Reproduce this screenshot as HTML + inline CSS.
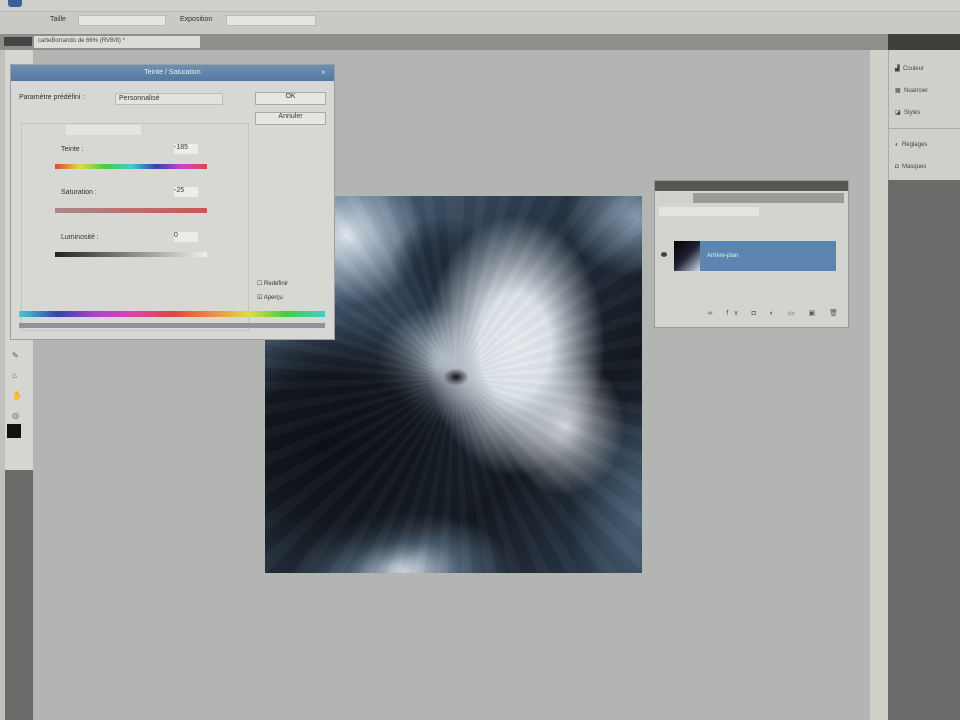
<!DOCTYPE html>
<html><head><meta charset="utf-8"><style>
*{margin:0;padding:0;box-sizing:border-box}
body{width:960px;height:720px;overflow:hidden;background:#b3b5b2;font-family:"Liberation Sans",sans-serif;font-size:8px;color:#333;position:relative}
.a{position:absolute}
</style></head><body>
<div class="a" style="left:0;top:0;width:960px;height:12px;background:#cfd0cc;border-bottom:1px solid #b8b9b5"></div>
<div class="a" style="left:8px;top:0;width:14px;height:7px;background:#3b5f99;border-radius:0 0 3px 3px"></div>
<div class="a" style="left:0;top:12px;width:960px;height:22px;background:#c9cac6"></div>
<div class="a" style="left:50px;top:16px;font-size:7px">Taille</div>
<div class="a" style="left:78px;top:15px;width:88px;height:11px;background:#e4e5e2;border:1px solid #bbb"></div>
<div class="a" style="left:180px;top:16px;font-size:7px">Exposition</div>
<div class="a" style="left:226px;top:15px;width:90px;height:11px;background:#e4e5e2;border:1px solid #bbb"></div>
<div class="a" style="left:0;top:34px;width:888px;height:16px;background:#8d8f8b"></div>
<div class="a" style="left:4px;top:37px;width:28px;height:9px;background:#444"></div>
<div class="a" style="left:34px;top:36px;width:166px;height:12px;background:#dcdcd9;font-size:6px;padding:2px 4px;color:#444">carteBorrando de 66% (RVB/8) *</div>
<div class="a" style="left:888px;top:34px;width:72px;height:16px;background:#3e403c"></div>
<div class="a" style="left:870px;top:50px;width:18px;height:670px;background:#cfd0c8"></div>
<div class="a" style="left:888px;top:50px;width:72px;height:130px;background:#cfd0cc;border-left:1px solid #aaa"></div>
<div class="a" style="left:888px;top:180px;width:72px;height:540px;background:#6a6b68"></div>
<div class="a" style="left:895px;top:58px;font-size:6px;line-height:22px;color:#444">▟ &nbsp;Couleur<br>▦ &nbsp;Nuancier<br>◪ &nbsp;Styles</div>
<div class="a" style="left:888px;top:128px;width:72px;height:1px;background:#aaa"></div>
<div class="a" style="left:895px;top:134px;font-size:6px;line-height:22px;color:#444">◐ &nbsp;Réglages<br>◘ &nbsp;Masques</div>
<div class="a" style="left:0;top:50px;width:5px;height:670px;background:#c0c1bd"></div>
<div class="a" style="left:5px;top:50px;width:28px;height:420px;background:#d5d6d2"></div>
<div class="a" style="left:5px;top:470px;width:28px;height:250px;background:#6a6b68"></div>
<div class="a" style="left:7px;top:424px;width:14px;height:14px;background:#111"></div>
<div class="a" style="left:12px;top:346px;font-size:8px;line-height:20px;color:#555">✎<br>⌂<br>✋<br>◎</div>
<div class="a" style="left:265px;top:196px;width:377px;height:377px;overflow:hidden;background:#1a1e24">
 <div class="a" style="inset:0;background:
 radial-gradient(ellipse 90px 130px at 250px 150px,#f6f7f7 0%,#e8edf0 40%,rgba(200,212,222,0) 100%),
 radial-gradient(ellipse 60px 70px at 300px 230px,rgba(238,241,242,.9) 0%,rgba(0,0,0,0) 100%),
 radial-gradient(ellipse 55px 50px at 180px 70px,#1c2632 0%,rgba(28,38,50,.8) 50%,rgba(0,0,0,0) 100%),
 radial-gradient(ellipse 150px 130px at 70px 250px,#07090b 0%,#0e1114 55%,rgba(14,17,20,0) 100%),
 radial-gradient(ellipse 60px 60px at 170px 170px,#c9d4dc 0%,rgba(0,0,0,0) 100%),
 radial-gradient(ellipse 80px 70px at 80px 40px,#eef2f4 0%,rgba(180,196,210,.7) 50%,rgba(0,0,0,0) 100%),
 radial-gradient(ellipse 110px 60px at 140px 375px,#dbe2e8 0%,rgba(120,145,170,.6) 50%,rgba(0,0,0,0) 100%),
 radial-gradient(ellipse 70px 120px at 375px 320px,#4e6478 0%,rgba(0,0,0,0) 100%),
 radial-gradient(ellipse 60px 80px at 10px 20px,#9fb1c1 0%,rgba(0,0,0,0) 100%),
 radial-gradient(ellipse 70px 60px at 370px 20px,#8ea3b6 0%,rgba(0,0,0,0) 100%),
 linear-gradient(135deg,#5d7690,#25313e 40%,#101317 70%,#2e3d4c)"></div>
 <div class="a" style="inset:0;background:repeating-conic-gradient(from 0deg at 190px 182px,rgba(255,255,255,.03) 0deg 3deg,rgba(0,0,0,.03) 3deg 7deg)"></div>
 <div class="a" style="inset:0;background:rgba(60,100,150,.08)"></div>
 <div class="a" style="left:178px;top:172px;width:26px;height:18px;background:radial-gradient(#111 0%,rgba(0,0,0,0) 70%)"></div>
</div>
<div class="a" style="left:10px;top:64px;width:325px;height:276px;background:#d7d8d4;border:1px solid #9aa0a6">
 <div class="a" style="left:0;top:0;width:323px;height:16px;background:linear-gradient(#6f8fb0,#547aa0);color:#e6eef6;font-size:7px;text-align:center;line-height:16px">Teinte / Saturation</div>
 <div class="a" style="left:310px;top:3px;color:#dde;font-size:8px">×</div>
 <div class="a" style="left:8px;top:29px;font-size:7px">Paramètre prédéfini :</div>
 <div class="a" style="left:104px;top:28px;width:108px;height:12px;background:#e2e3df;border:1px solid #bbb;font-size:7px;padding:1px 3px">Personnalisé</div>
 <div class="a" style="left:244px;top:27px;width:71px;height:13px;background:#e6e6e3;border:1px solid #aaa;font-size:7px;text-align:center">OK</div>
 <div class="a" style="left:244px;top:47px;width:71px;height:13px;background:#e6e6e3;border:1px solid #aaa;font-size:7px;text-align:center">Annuler</div>
 <div class="a" style="left:10px;top:58px;width:228px;height:208px;border:1px solid #c4c5c1"></div>
 <div class="a" style="left:55px;top:60px;width:75px;height:10px;background:#e5e6e3"></div>
 <div class="a" style="left:50px;top:81px;font-size:7px">Teinte :</div>
 <div class="a" style="left:163px;top:79px;width:24px;height:10px;background:#ececea;font-size:7px">-185</div>
 <div class="a" style="left:44px;top:99px;width:152px;height:5px;background:linear-gradient(90deg,#d44,#dd4,#4c4,#4cc,#34a,#c4c,#d44)"></div>
 <div class="a" style="left:50px;top:124px;font-size:7px">Saturation :</div>
 <div class="a" style="left:163px;top:122px;width:24px;height:10px;background:#ececea;font-size:7px">-25</div>
 <div class="a" style="left:44px;top:143px;width:152px;height:5px;background:linear-gradient(90deg,#a88,#c55)"></div>
 <div class="a" style="left:50px;top:169px;font-size:7px">Luminosité :</div>
 <div class="a" style="left:163px;top:167px;width:24px;height:10px;background:#ececea;font-size:7px">0</div>
 <div class="a" style="left:44px;top:187px;width:152px;height:5px;background:linear-gradient(90deg,#222,#eee)"></div>
 <div class="a" style="left:246px;top:212px;font-size:6px;line-height:14px">☐ Redéfinir<br>☑ Aperçu</div>
 <div class="a" style="left:8px;top:246px;width:306px;height:6px;background:linear-gradient(90deg,#4cc,#34a,#a4c,#d4a,#d44,#e84,#dd4,#4c4,#4cc)"></div>
 <div class="a" style="left:8px;top:258px;width:306px;height:5px;background:#8e949a"></div>
</div>
<div class="a" style="left:654px;top:180px;width:195px;height:148px;background:#d3d4d0;border:1px solid #999">
 <div class="a" style="left:0;top:0;width:193px;height:10px;background:#555753"></div>
 <div class="a" style="left:4px;top:12px;width:185px;height:10px;background:#9a9c98"></div>
 <div class="a" style="left:4px;top:12px;width:34px;height:10px;background:#d0d1cd"></div>
 <div class="a" style="left:4px;top:26px;width:100px;height:9px;background:#e3e4e0"></div>
 <div class="a" style="left:19px;top:60px;width:162px;height:30px;background:#5c86b1"></div>
 <div class="a" style="left:19px;top:60px;width:26px;height:30px;background:linear-gradient(135deg,#000,#223,#cde)"></div>
 <div class="a" style="left:52px;top:72px;font-size:6px;color:#cfe">Arrière-plan</div>
 <div class="a" style="left:6px;top:71px;width:6px;height:5px;background:#444;border-radius:50%"></div>
 <div class="a" style="left:4px;top:128px;width:185px;height:14px;font-size:7px;text-align:right;color:#555;letter-spacing:6px">∞ fx ◘ ◐ ▭ ▣ 🗑</div>
</div>
</body></html>
